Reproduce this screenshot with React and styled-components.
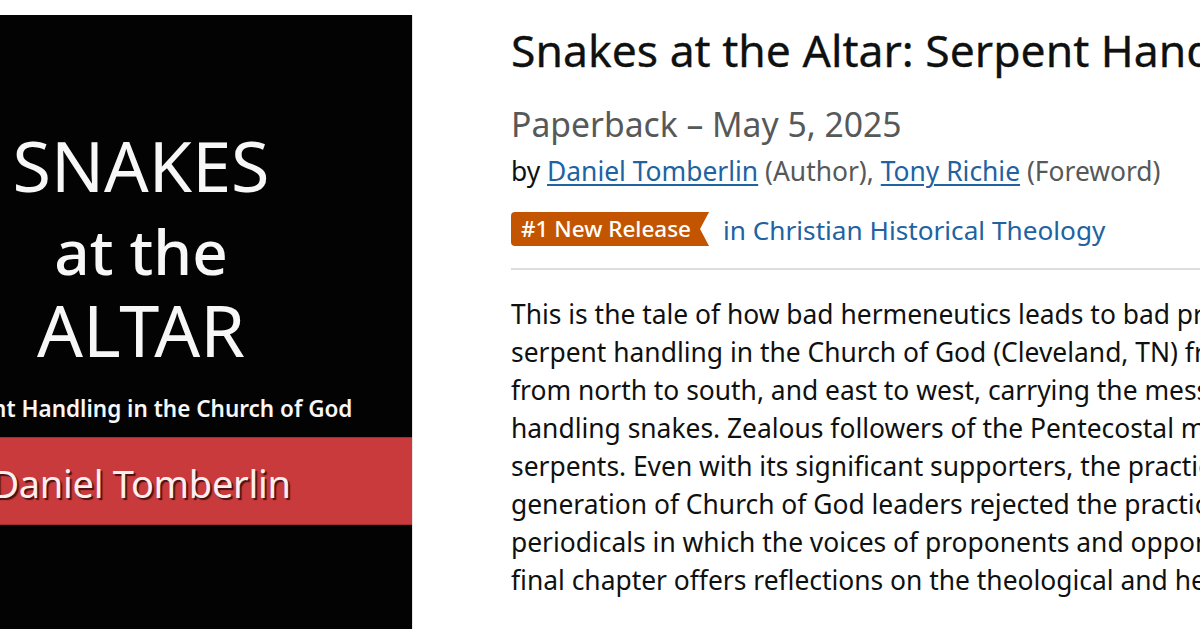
import React from "react";
import styled, { createGlobalStyle } from "styled-components";

const GlobalStyle = createGlobalStyle`
  html, body {
    margin: 0;
    padding: 0;
    background: #ffffff;
    overflow: hidden;
  }
  body {
    font-family: "Noto Sans", "Open Sans", sans-serif;
    color: #0f1111;
  }
`;

const Page = styled.div`
  display: flex;
  align-items: flex-start;
  width: 1200px;
  height: 629px;
  overflow: hidden;
  padding-top: 15px;
  box-sizing: border-box;
  gap: 98px;
`;

const CoverFrame = styled.div`
  flex: 0 0 413px;
  height: 640px;
  overflow: hidden;
  border-right: 1px solid #e4e4e4;
  box-sizing: border-box;
`;

const Cover = styled.div`
  width: 544px;
  margin-left: -131px;
  height: 100%;
  background: #030303;
  display: flex;
  flex-direction: column;
  align-items: center;
  padding-top: 106px;
  box-sizing: border-box;
  font-family: "Noto Sans", "Open Sans", sans-serif;
  color: #f7f7f7;
`;

const CoverLine = styled.div`
  font-size: ${(p) => p.$size}px;
  line-height: ${(p) => p.$lh}px;
  font-weight: ${(p) => p.$weight || 400};
  margin-top: ${(p) => p.$mt || 0}px;
  white-space: nowrap;
`;

const AuthorBand = styled.div`
  align-self: stretch;
  margin-top: 8px;
  height: 88px;
  padding-top: 4px;
  box-sizing: border-box;
  background: #c83a3b;
  border-top: 1px solid #a52b2c;
  border-bottom: 1px solid #a52b2c;
  text-align: center;
  font-size: 38px;
  line-height: 82px;
  letter-spacing: -0.3px;
  color: #fbeeee;
  text-shadow: 2px 2px 1px #4a1212;
  white-space: nowrap;
`;

const Details = styled.div`
  flex: 1 1 auto;
  min-width: 0;
  display: flex;
  flex-direction: column;
  margin-top: 7px;
`;

const Title = styled.h1`
  margin: 0;
  font-size: 44.5px;
  line-height: 56px;
  font-weight: 400;
  color: #0f1111;
  white-space: nowrap;
  -webkit-text-stroke: 0.3px #0f1111;
`;

const Subtitle = styled.div`
  margin-top: 24px;
  font-size: 33.7px;
  line-height: 44px;
  color: #565959;
  white-space: nowrap;
`;

const Byline = styled.div`
  margin-top: 7px;
  font-size: 26.4px;
  line-height: 36px;
  color: #0f1111;
  white-space: nowrap;
`;

const Role = styled.span`
  color: #565959;
`;

const AuthorLink = styled.a`
  color: #2162a1;
  text-decoration: underline;
  text-underline-offset: 3px;
  text-decoration-thickness: 2px;
`;

const BadgeRow = styled.div`
  margin-top: 23px;
  display: flex;
  align-items: center;
  gap: 14px;
  height: 34px;
  white-space: nowrap;
`;

const Badge = styled.span`
  display: inline-flex;
  align-items: center;
  height: 34px;
  padding: 0 18px 0 10px;
  background: #c45500;
  color: #ffffff;
  font-size: 22.5px;
  font-weight: 500;
  line-height: 34px;
  border-radius: 4px 0 0 4px;
  clip-path: polygon(0 0, 100% 0, calc(100% - 9px) 50%, 100% 100%, 0 100%);
`;

const CategoryLink = styled.a`
  color: #2162a1;
  font-size: 26.2px;
  line-height: 34px;
  text-decoration: none;
  padding-top: 2px;
`;

const Divider = styled.hr`
  margin: 22px 0 0 0;
  border: none;
  border-top: 2px solid #dddddd;
  height: 0;
`;

const Description = styled.div`
  margin-top: 25px;
  font-size: 26.4px;
  line-height: 38px;
  color: #0f1111;
`;

const DescLine = styled.div`
  white-space: nowrap;
`;

const lines = [
  "This is the tale of how bad hermeneutics leads to bad practice. It chronicles the rise and fall of",
  "serpent handling in the Church of God (Cleveland, TN) from 1908 to 1928. Evangelists fanned out",
  "from north to south, and east to west, carrying the message of Pentecost and the practice of",
  "handling snakes. Zealous followers of the Pentecostal movement took up deadly",
  "serpents. Even with its significant supporters, the practice was controversial, and a new",
  "generation of Church of God leaders rejected the practice. This book draws on denominational",
  "periodicals in which the voices of proponents and opponents of serpent handling are heard. The",
  "final chapter offers reflections on the theological and hermeneutical issues at stake.",
];

export default function App() {
  return (
    <>
      <GlobalStyle />
      <Page>
        <CoverFrame>
          <Cover>
            <CoverLine $size={70} $lh={88}>SNAKES</CoverLine>
            <CoverLine $size={62} $lh={84} $weight={500}>at the</CoverLine>
            <CoverLine $size={72} $lh={72}>ALTAR</CoverLine>
            <CoverLine $size={22.5} $lh={40} $weight={600} $mt={24}>
              Serpent Handling in the Church of God
            </CoverLine>
            <AuthorBand>Daniel Tomberlin</AuthorBand>
          </Cover>
        </CoverFrame>
        <Details>
          <Title>Snakes at the Altar: Serpent Handling in the Church of God</Title>
          <Subtitle>Paperback – May 5, 2025</Subtitle>
          <Byline>
            by <AuthorLink href="#">Daniel Tomberlin</AuthorLink> <Role>(Author),</Role>{" "}
            <AuthorLink href="#">Tony Richie</AuthorLink> <Role>(Foreword)</Role>
          </Byline>
          <BadgeRow>
            <Badge>#1 New Release</Badge>
            <CategoryLink href="#">in Christian Historical Theology</CategoryLink>
          </BadgeRow>
          <Divider />
          <Description>
            {lines.map((l, i) => (
              <DescLine key={i}>{l}</DescLine>
            ))}
          </Description>
        </Details>
      </Page>
    </>
  );
}
